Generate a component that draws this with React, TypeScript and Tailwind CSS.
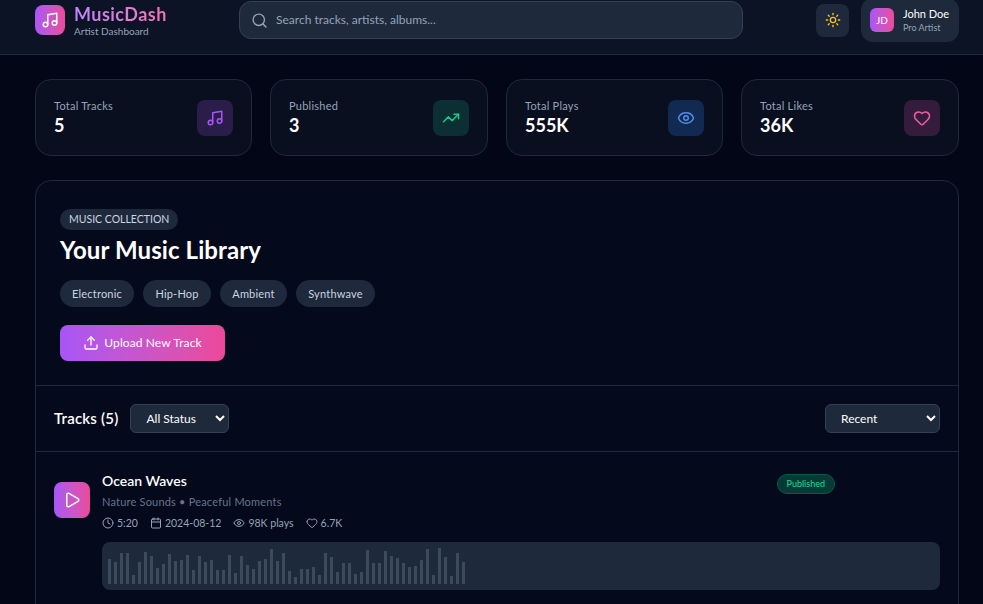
import { Calendar, Clock, Eye, Heart, Music, Play, Search, Sun, TrendingUp, Upload } from 'lucide-react';

const stats = [
  { label: 'Total Tracks', value: '5', icon: Music, box: 'bg-[#2a1d4a]', color: 'text-[#a855f7]' },
  { label: 'Published', value: '3', icon: TrendingUp, box: 'bg-[#0b2f33]', color: 'text-[#22c58b]' },
  { label: 'Total Plays', value: '555K', icon: Eye, box: 'bg-[#122a52]', color: 'text-[#4f8fea]' },
  { label: 'Total Likes', value: '36K', icon: Heart, box: 'bg-[#351c3d]', color: 'text-[#ec5fa5]' },
];

const genres = [
  { name: 'Electronic', width: 'w-[74px]' },
  { name: 'Hip-Hop', width: 'w-[68px]' },
  { name: 'Ambient', width: 'w-[67px]' },
  { name: 'Synthwave', width: 'w-[79px]' },
];

const bars = [
  25, 22, 31, 31, 9, 22, 32, 28, 16, 20, 30, 23, 24, 29, 14, 28, 22, 24, 14, 14, 29, 11, 28, 19, 15, 23, 25, 35, 23,
  31, 13, 7, 15, 15, 17, 9, 31, 27, 12, 21, 21, 10, 12, 34, 21, 21, 33, 28, 26, 21, 17, 18, 24, 35, 9, 36, 27, 8, 31, 22,
];

export default function App() {
  return (
    <div className="h-[604px] overflow-hidden bg-[#020617] font-['Lato',sans-serif] text-white">
      <header className="flex h-[55px] items-center border-b border-[#1e293b] bg-[#0c1324] pb-[14px] pl-[35px] pr-[24px]">
        <div className="flex w-[204px] items-center gap-[9px]">
          <div className="flex h-[30px] w-[30px] items-center justify-center rounded-lg bg-gradient-to-r from-[#a855f7] to-[#ec4899]">
            <Music size={18} />
          </div>
          <div>
            <div className="bg-gradient-to-r from-[#c084fc] to-[#f472b6] bg-clip-text text-[18px] font-bold leading-[22px] tracking-[0.45px] text-transparent">
              MusicDash
            </div>
            <div className="text-[10px] leading-[12px] text-[#94a3b8]">Artist Dashboard</div>
          </div>
        </div>
        <div className="flex h-[38px] w-[504px] items-center gap-[8px] rounded-xl border border-[#334155] bg-[#1e293b] pl-[11px]">
          <Search size={17} className="text-[#94a3b8]" />
          <span className="text-[12px] text-[#94a3b8]">Search tracks, artists, albums...</span>
        </div>
        <div className="ml-auto flex items-center gap-3">
          <div className="flex h-[33px] w-[33px] items-center justify-center rounded-lg bg-[#1e293b]">
            <Sun size={16} className="text-[#fbbf24]" />
          </div>
          <div className="flex h-[44px] w-[98px] items-center gap-[9px] rounded-xl bg-[#1e293b] pl-[9px]">
            <div className="flex h-6 w-6 items-center justify-center rounded-md bg-gradient-to-r from-[#a855f7] to-[#ec4899] text-[10px]">
              JD
            </div>
            <div>
              <div className="text-[11px] leading-[14px]">John Doe</div>
              <div className="mt-px text-[9px] leading-[12px] text-[#94a3b8]">Pro Artist</div>
            </div>
          </div>
        </div>
      </header>

      <main className="pl-[35px] pr-[24px] pt-6">
        <div className="grid grid-cols-[217px_218px_217px_218px] gap-[18px]">
          {stats.map((stat) => (
            <div
              key={stat.label}
              className="flex h-[77px] items-center justify-between rounded-2xl border border-[#1e293b] bg-[#0a0f1f] px-[18px]"
            >
              <div>
                <div className="text-[11px] leading-[14px] tracking-[0.25px] text-[#94a3b8]">{stat.label}</div>
                <div className="text-[18px] font-bold leading-[24px]">{stat.value}</div>
              </div>
              <div className={`flex h-9 w-9 items-center justify-center rounded-lg ${stat.box}`}>
                <stat.icon size={18} className={stat.color} />
              </div>
            </div>
          ))}
        </div>

        <section className="mt-6 h-[500px] rounded-2xl border border-[#1e293b] bg-[#040a1c]">
          <div className="h-[205px] border-b border-[#1e293b] px-6 pt-6">
            <span className="inline-block rounded-full bg-[#1e293b] px-[9px] text-[10.5px] leading-[21px] text-[#cbd5e1]">
              MUSIC COLLECTION
            </span>
            <h1 className="mt-[4px] text-[24px] font-bold leading-[32px] tracking-[0.1px]">Your Music Library</h1>
            <div className="mt-[14px] flex gap-[9px]">
              {genres.map((genre) => (
                <span
                  key={genre.name}
                  className={`rounded-full bg-[#1e293b] text-center text-[11px] leading-[27px] tracking-[0.2px] text-[#cbd5e1] ${genre.width}`}
                >
                  {genre.name}
                </span>
              ))}
            </div>
            <button className="mt-[18px] flex h-9 w-[165px] items-center justify-center gap-[5px] rounded-lg bg-gradient-to-r from-[#a855f7] to-[#ec4899] text-[12px] tracking-[0.1px]">
              <Upload size={16} />
              Upload New Track
            </button>
          </div>

          <div className="flex h-[66px] items-center justify-between border-b border-[#1e293b] px-[18px]">
            <div className="flex items-center gap-3">
              <span className="text-[15px] font-semibold tracking-[0.2px]">Tracks (5)</span>
              <select className="h-[29px] w-[99px] rounded-md border border-[#334155] bg-[#1e293b] pl-[11px] text-[12px] text-white">
                <option>All Status</option>
              </select>
            </div>
            <select className="h-[29px] w-[115px] rounded-md border border-[#334155] bg-[#1e293b] pl-[11px] text-[12px] text-white">
              <option>Recent</option>
            </select>
          </div>

          <div className="flex gap-3 px-[18px] pt-[18px]">
            <div className="mt-[12px] flex h-9 w-9 shrink-0 items-center justify-center rounded-lg bg-gradient-to-r from-[#a855f7] to-[#ec4899]">
              <Play size={18} />
            </div>
            <div className="min-w-0 flex-1">
              <div className="flex justify-between pr-[105px]">
                <div className="mt-px">
                  <div className="text-[14px] font-semibold leading-[20px]">Ocean Waves</div>
                  <div className="mt-px text-[11px] leading-[20px] tracking-[0.2px] text-[#64748b]">Nature Sounds • Peaceful Moments</div>
                </div>
                <span className="mt-[4px] h-[20px] rounded-full border border-[#0b5a4c] bg-[#063a35] px-[9px] text-[9px] leading-[18px] text-[#2dd4a0]">
                  Published
                </span>
              </div>
              <div className="mt-[3px] flex gap-3 text-[10.5px] leading-[16px] text-[#94a3b8]">
                <span className="flex items-center gap-[3px]"><Clock size={12} />5:20</span>
                <span className="flex items-center gap-[3px]"><Calendar size={12} />2024-08-12</span>
                <span className="flex items-center gap-[3px]"><Eye size={12} />98K plays</span>
                <span className="flex items-center gap-[3px]"><Heart size={12} />6.7K</span>
              </div>
              <div className="mt-[11px] flex h-12 items-end gap-[3px] rounded-lg bg-[#1e293b] pb-[6px] pl-[6px]">
                {bars.map((h, i) => (
                  <div key={i} className="w-[3px] bg-[#3c4a5e]" style={{ height: h }} />
                ))}
              </div>
            </div>
          </div>
        </section>
      </main>
    </div>
  );
}
